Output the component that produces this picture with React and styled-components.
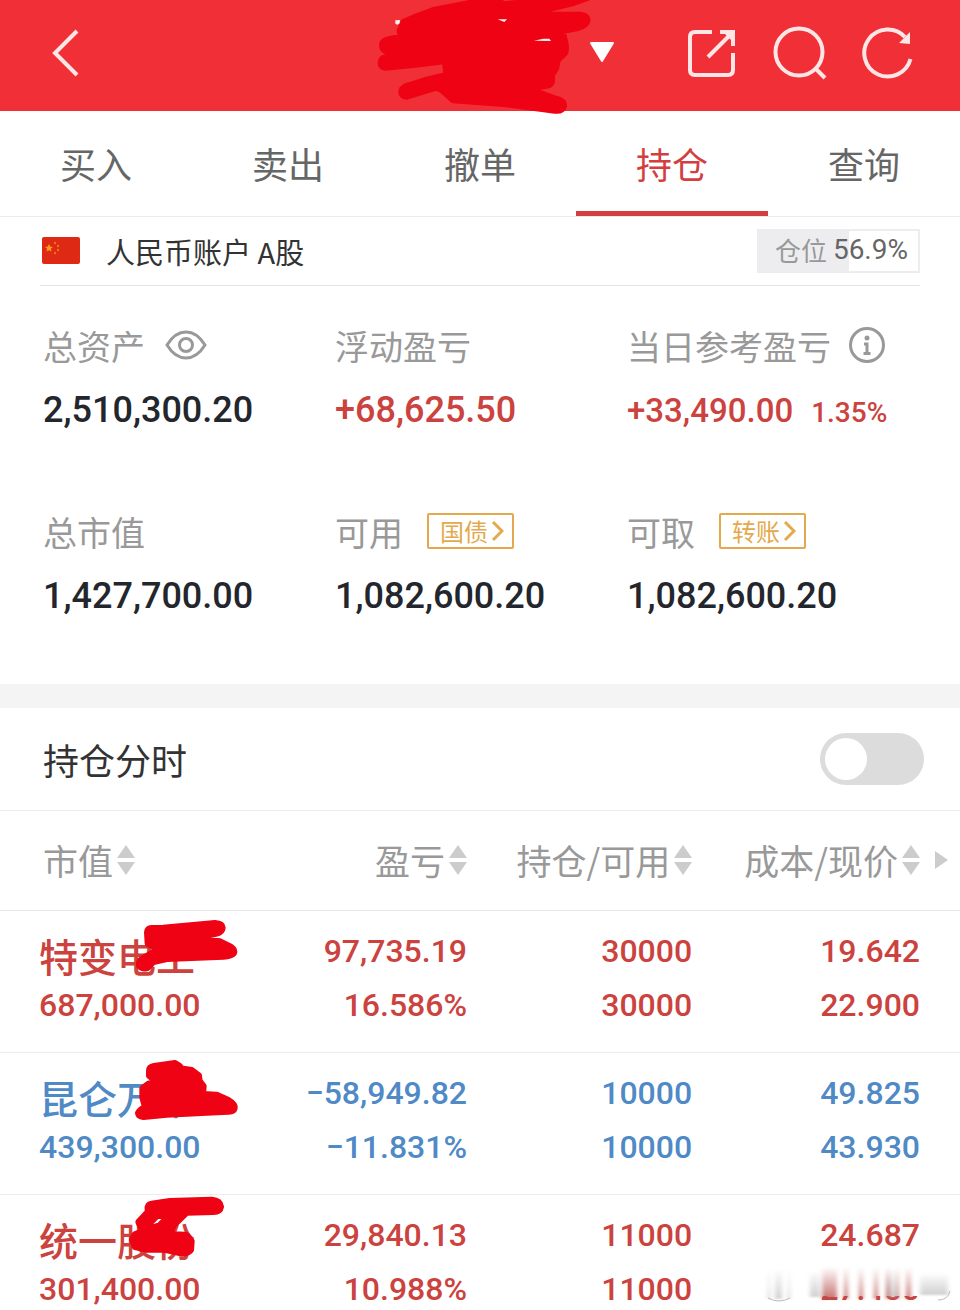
import React, { useState } from 'react';
import styled, { createGlobalStyle } from 'styled-components';

const RED = '#cb423e';
const BLUE = '#4f8ac6';
const INK = '#ee0213';

const GlobalStyle = createGlobalStyle`
    * {
        box-sizing: border-box;
    }
    body {
        margin: 0;
        background: #fff;
        color: #333;
        font-family: 'Noto Sans CJK SC', sans-serif;
        overflow: hidden;
    }
`;

const BaseButton = styled.button`
    padding: 0;
    border: none;
    background: none;
    color: inherit;
    font: inherit;
    cursor: pointer;
`;

const Header = styled.header`
    display: grid;
    grid-template-columns: 1fr auto 1fr;
    padding: 25px 44px 30px;
    background: #f12f37;
`;

const IconButton = styled(BaseButton)`
    width: 56px;
    height: 56px;
    color: #ffe6e6;
`;

const TitleButton = styled(BaseButton)`
    position: relative;
    display: flex;
    align-items: center;
    justify-content: flex-end;
    width: 272px;
    height: 56px;
`;

const Actions = styled.div`
    display: flex;
    justify-content: flex-end;
    gap: 32px;
`;

const Icon = styled.svg`
    display: block;
    flex: none;
    fill: none;
    stroke: currentColor;
    stroke-width: ${({ $stroke }) => $stroke || 4}px;
`;

const Scribble = styled.svg`
    position: absolute;
    top: ${({ $top }) => $top}px;
    left: ${({ $left }) => $left}px;
    z-index: 1;
    fill: ${INK};
    stroke: ${INK};
    stroke-width: 20px;
    stroke-linejoin: round;
    pointer-events: none;
`;

const Tabs = styled.nav`
    display: grid;
    grid-template-columns: repeat(5, 1fr);
    border-bottom: 1px solid #ececec;
`;

const Tab = styled(BaseButton)`
    height: 105px;
    padding-top: 4px;
    border-bottom: 5px solid ${({ $active }) => ($active ? '#d33f40' : 'transparent')};
    color: ${({ $active }) => ($active ? '#d33f40' : '#666')};
    font-size: 36px;
    line-height: 52px;
`;

const Account = styled.section`
    display: flex;
    align-items: center;
    height: 69px;
    margin: 0 40px;
    border-bottom: 1px solid #e4e4e4;
`;

const AccountName = styled.span`
    flex: 1;
    margin-left: 26px;
    font-size: 29px;
    line-height: 44px;
`;

const Ratio = styled.div`
    display: flex;
    align-items: center;
    gap: 6px;
    height: 44px;
    padding: 0 10px 2px 16px;
    border: 2px solid #ededf0;
    background: linear-gradient(to right, #ededf0 ${({ $value }) => $value}%, #fff ${({ $value }) => $value}%);
    color: #999;
    font-size: 26px;
    line-height: 40px;
`;

const RatioValue = styled.span`
    color: #666;
    font-family: Roboto, sans-serif;
    font-size: 28px;
`;

const Summary = styled.section`
    display: grid;
    grid-template-columns: repeat(3, 1fr);
    row-gap: 67px;
    padding: 33px 41px 62px 43px;
    border-bottom: 24px solid #f4f4f4;
`;

const Label = styled.div`
    display: flex;
    align-items: center;
    height: 52px;
    color: #999;
    font-size: 34px;
    white-space: nowrap;

    > svg {
        margin-left: 17px;
    }
`;

const Amount = styled.div`
    display: flex;
    align-items: baseline;
    gap: 18px;
    margin-top: 14px;
    color: ${({ $color }) => $color || '#24262d'};
    font-family: Roboto, sans-serif;
    font-size: ${({ $small }) => ($small ? 33 : 36)}px;
    font-weight: 500;
    line-height: 51px;
    white-space: nowrap;
`;

const Percent = styled.span`
    font-size: 28px;
`;

const Tag = styled(BaseButton)`
    display: flex;
    align-items: center;
    gap: 3px;
    height: 36px;
    margin-left: 24px;
    padding: 0 8px 0 11px;
    border: 2px solid #e3a94c;
    border-radius: 2px;
    color: #e3a94c;
    font-size: 24px;
    line-height: 32px;
`;

const SwitchRow = styled.label`
    display: flex;
    align-items: center;
    justify-content: space-between;
    height: 103px;
    padding: 0 36px 0 43px;
    border-bottom: 1px solid #ececec;
    font-size: 36px;
`;

const Switch = styled.input`
    appearance: none;
    width: 104px;
    height: 52px;
    margin: 0;
    padding: 5px;
    border-radius: 26px;
    background: ${({ checked }) => (checked ? '#d33f40' : '#dcdcdc')};

    &::before {
        content: '';
        display: block;
        width: 42px;
        height: 42px;
        margin-left: ${({ checked }) => (checked ? 52 : 0)}px;
        border-radius: 50%;
        background: #fff;
    }
`;

const Table = styled.table`
    width: 100%;
    border-collapse: collapse;
    table-layout: fixed;
`;

const Col = styled.col`
    width: ${({ $width }) => $width};
`;

const Th = styled.th`
    position: relative;
    height: 99px;
    padding: 0 ${({ $last }) => ($last ? 40 : 0)}px 0 ${({ $first }) => ($first ? 43 : 0)}px;
    border-bottom: 1px solid #e8e8e8;
    font-weight: 400;
`;

const SortButton = styled(BaseButton)`
    display: flex;
    align-items: center;
    gap: 4px;
    margin-left: ${({ $first }) => ($first ? 0 : 'auto')};
    color: #999;
    font-size: 35px;
    line-height: 52px;
    white-space: nowrap;

    svg {
        fill: #ccc;
    }
`;

const MoreArrow = styled.svg`
    position: absolute;
    top: 40px;
    right: 12px;
    fill: #ccc;
`;

const Row = styled.tr`
    color: ${({ $color }) => $color};
    border-bottom: 1px solid #ececec;
`;

const Td = styled.td`
    position: relative;
    height: 142px;
    padding: 13px ${({ $last }) => ($last ? 40 : 0)}px 0 ${({ $first }) => ($first ? 39 : 0)}px;
    font-family: Roboto, sans-serif;
    font-size: 32px;
    font-weight: 500;
    line-height: 54px;
    text-align: ${({ $first }) => ($first ? 'left' : 'right')};
    vertical-align: top;
    white-space: nowrap;
`;

const StockName = styled.div`
    height: 54px;
    font-family: 'Noto Sans CJK SC', sans-serif;
    font-size: 39px;
    line-height: 62px;
`;

const Smear = styled.svg`
    position: absolute;
    top: 70px;
    right: 0;
`;

const SCRIBBLES = [
    {
        top: 0,
        path: 'M382 64Q382 51 396 52L430 51L585 37Q606 38 607 50Q606 62 590 67L540 78L540 86L600 92L632 108Q645 118 641 126Q634 134 610 136L440 143L400 152L382 170Q366 174 358 164Q356 152 366 144L400 124L410 112L384 98Z',
    },
    {
        top: -2,
        path: 'M388 60Q388 48 402 46L465 37L478 45L484 53L515 58L536 74L538 90L550 106L548 130L590 132L625 148Q646 160 643 172Q640 182 624 181L560 184L440 190L370 197Q356 196 355 186Q360 176 376 168L368 140L368 112L384 100L408 90L388 74Z',
    },
    {
        top: -9,
        path: 'M384 72Q382 56 395 54L450 46L575 42Q600 44 602 62Q600 76 580 77L500 79L460 118L450 144L500 148L514 166L512 192Q504 202 485 202L460 196L430 190L380 190L345 182L337 160L345 146L364 138L420 118L450 86L410 90L388 112L362 122L356 108L384 78Z',
    },
];

const HOLDINGS = [
    { name: '特变电工', value: '687,000.00', profit: '97,735.19', rate: '16.586%', held: '30000', free: '30000', cost: '19.642', price: '22.900' },
    { name: '昆仑万维', value: '439,300.00', profit: '−58,949.82', rate: '−11.831%', held: '10000', free: '10000', cost: '49.825', price: '43.930' },
    { name: '统一股份', value: '301,400.00', profit: '29,840.13', rate: '10.988%', held: '11000', free: '11000', cost: '24.687', price: '27.400' },
];

const TABS = ['买入', '卖出', '撤单', '持仓', '查询'];
const COLUMNS = ['市值', '盈亏', '持仓/可用', '成本/现价'];

const Flag = () => (
    <svg width="40" height="28" viewBox="0 0 40 28" aria-hidden="true">
        <rect x="2" y="0" width="38" height="27" rx="2" fill="#de2a15" />
        <path d="M9 7l1.200 2.600 2.800.3-2.100 1.900.6 2.800L9 13.200l-2.500 1.400.6-2.800L5 9.900l2.800-.3z" fill="#fb9b1e" />
        <g fill="#f5701c">
            <circle cx="15" cy="6" r="1.200" />
            <circle cx="18" cy="9" r="1.200" />
            <circle cx="18" cy="13" r="1.200" />
            <circle cx="15" cy="16" r="1.200" />
        </g>
    </svg>
);

const Chevron = () => (
    <Icon width="13" height="22" viewBox="0 0 13 22" $stroke={3} aria-hidden="true">
        <path d="M2 2l9 9-9 9" />
    </Icon>
);

const SmearedMark = () => (
    <Smear width="200" height="46" viewBox="0 0 200 46" aria-hidden="true">
        <defs>
            <filter id="soft" x="-20%" y="-20%" width="140%" height="140%">
                <feGaussianBlur stdDeviation="2 1" />
            </filter>
            <linearGradient id="streak" x1="0" y1="0" x2="0" y2="1">
                <stop offset="0" stopColor="#b8504c" stopOpacity="0" />
                <stop offset="1" stopColor="#b8504c" stopOpacity="0.8" />
            </linearGradient>
            <linearGradient id="grey" x1="0" y1="0" x2="0" y2="1">
                <stop offset="0" stopColor="#bbb" stopOpacity="0" />
                <stop offset="1" stopColor="#bbb" stopOpacity="0.7" />
            </linearGradient>
        </defs>
        <rect x="0" y="0" width="200" height="31" fill="#fff" />
        <g filter="url(#soft)">
            <g fill="url(#grey)">
                <rect x="8" y="4" width="2" height="30" />
                <rect x="15" y="4" width="7" height="30" />
                <rect x="28" y="4" width="2" height="30" />
                <rect x="50" y="6" width="10" height="26" />
                <rect x="126" y="4" width="10" height="28" />
                <rect x="160" y="8" width="28" height="22" />
            </g>
            <g fill="url(#streak)">
                <rect x="62" y="2" width="15" height="32" />
                <rect x="84" y="2" width="4" height="32" />
                <rect x="99" y="2" width="4" height="32" />
                <rect x="114" y="2" width="4" height="32" />
                <rect x="126" y="2" width="4" height="32" />
                <rect x="136" y="2" width="3" height="32" />
                <rect x="146" y="2" width="5" height="32" />
            </g>
        </g>
        <path d="M8 33q11 6 22 0M178 35q10 0 12-9" fill="none" stroke="#bbb" />
    </Smear>
);

const App = () => {
    const [tab, setTab] = useState('持仓');
    const [showTimeline, setShowTimeline] = useState(false);

    return (
        <>
            <GlobalStyle />
            <Header>
                <IconButton aria-label="返回">
                    <Icon width="56" height="56" viewBox="0 0 56 56">
                        <path d="M33 6L11 28l22 22" />
                    </Icon>
                </IconButton>
                <TitleButton aria-label="切换账户">
                    <svg width="28" height="24" viewBox="0 0 28 24">
                        <path d="M3 2h22L14 20z" fill="#fff" stroke="#fff" strokeWidth="2" strokeLinejoin="round" />
                    </svg>
                    <Scribble $top={-25} $left={16} width="300" height="120" viewBox="0 0 900 360">
                        <path d="M120 92L132 66L170 50L225 30L330 10L400 -10L430 14L470 10L540 2L600 -10H690L640 8L560 28L570 45L660 45Q680 46 682 60Q680 76 650 84L606 92L612 116Q620 140 615 158L592 180L588 204L574 226Q580 252 562 256L530 262L534 278L590 298Q612 304 611 318Q606 334 585 331L440 312L280 300L244 268L228 262L140 289Q124 288 125 272Q130 260 150 256L200 240L260 226L256 182L180 192L75 202Q63 200 63 188Q64 174 80 172L110 160L80 154Q66 148 67 134Q68 122 85 119L124 110Z" />
                        <path d="M106 61l14-1-1 10-7 4-6-3zM413 58l28 0-8 8zM522 122l28-6 18 0 5 7z" fill="#fff0ee" stroke="none" />
                    </Scribble>
                </TitleButton>
                <Actions>
                    <IconButton aria-label="分享">
                        <Icon width="56" height="56" viewBox="0 0 56 56">
                            <path d="M28 7H11q-5 0-5 5v33q0 5 5 5h33q5 0 5-5V28M36 7h13v14M24 32L48 8" />
                            <path d="M40 8h9v9z" fill="currentColor" stroke="none" />
                        </Icon>
                    </IconButton>
                    <IconButton aria-label="搜索">
                        <Icon width="56" height="56" viewBox="0 0 56 56">
                            <circle cx="27" cy="27" r="23.500" />
                            <path d="M43 43l10 10" />
                        </Icon>
                    </IconButton>
                    <IconButton aria-label="刷新">
                        <Icon width="56" height="56" viewBox="0 0 56 56">
                            <path d="M50.500 34A23.500 23.500 0 1 1 45 12" />
                            <path d="M50 7v12L39 18z" fill="currentColor" stroke="none" />
                        </Icon>
                    </IconButton>
                </Actions>
            </Header>

            <Tabs>
                {TABS.map((name) => (
                    <Tab key={name} $active={name === tab} onClick={() => setTab(name)}>
                        {name}
                    </Tab>
                ))}
            </Tabs>

            <Account>
                <Flag />
                <AccountName>人民币账户 A股</AccountName>
                <Ratio $value={56.9}>
                    仓位
                    <RatioValue>56.9%</RatioValue>
                </Ratio>
            </Account>

            <Summary>
                <div>
                    <Label>
                        总资产
                        <Icon width="48" height="34" viewBox="0 0 48 34" $stroke={3}>
                            <path d="M5 17Q13 4 24 4t19 13Q35 30 24 30T5 17z" />
                            <circle cx="24" cy="17" r="6.500" />
                        </Icon>
                    </Label>
                    <Amount>2,510,300.20</Amount>
                </div>
                <div>
                    <Label>浮动盈亏</Label>
                    <Amount $color={RED}>+68,625.50</Amount>
                </div>
                <div>
                    <Label>
                        当日参考盈亏
                        <Icon width="38" height="38" viewBox="0 0 38 38" $stroke={3}>
                            <circle cx="19" cy="19" r="16.500" />
                            <circle cx="19" cy="12" r="2.500" fill="currentColor" stroke="none" />
                            <path d="M16 18h3v9M15.500 27.500h7" />
                        </Icon>
                    </Label>
                    <Amount $color={RED} $small>
                        +33,490.00 <Percent>1.35%</Percent>
                    </Amount>
                </div>
                <div>
                    <Label>总市值</Label>
                    <Amount>1,427,700.00</Amount>
                </div>
                <div>
                    <Label>
                        可用
                        <Tag>国债<Chevron /></Tag>
                    </Label>
                    <Amount>1,082,600.20</Amount>
                </div>
                <div>
                    <Label>
                        可取
                        <Tag>转账<Chevron /></Tag>
                    </Label>
                    <Amount>1,082,600.20</Amount>
                </div>
            </Summary>

            <SwitchRow>
                持仓分时
                <Switch type="checkbox" checked={showTimeline} onChange={(e) => setShowTimeline(e.target.checked)} />
            </SwitchRow>

            <Table>
                <colgroup>
                    <Col $width="25%" />
                    <Col $width="23.65%" />
                    <Col $width="23.45%" />
                    <Col />
                </colgroup>
                <thead>
                    <tr>
                        {COLUMNS.map((name, i) => (
                            <Th key={name} $first={i === 0} $last={i === 3}>
                                <SortButton $first={i === 0}>
                                    {name}
                                    <svg width="18" height="30" viewBox="0 0 18 30" aria-hidden="true">
                                        <path d="M9 0l9 13H0zM9 30l9-13H0z" />
                                    </svg>
                                </SortButton>
                                {i === 3 && (
                                    <MoreArrow width="13" height="18" viewBox="0 0 13 18" aria-hidden="true">
                                        <path d="M0 0l13 9-13 9z" />
                                    </MoreArrow>
                                )}
                            </Th>
                        ))}
                    </tr>
                </thead>
                <tbody>
                    {HOLDINGS.map((row, i) => (
                        <Row key={row.name} $color={row.profit.startsWith('−') ? BLUE : RED}>
                            <Td $first>
                                <StockName>{row.name}</StockName>
                                {row.value}
                                <Scribble $top={SCRIBBLES[i].top} $left={20} width="240" height="120" viewBox="0 0 720 360">
                                    <path d={SCRIBBLES[i].path} />
                                </Scribble>
                            </Td>
                            <Td>
                                {row.profit}
                                <br />
                                {row.rate}
                            </Td>
                            <Td>
                                {row.held}
                                <br />
                                {row.free}
                            </Td>
                            <Td $last>
                                {row.cost}
                                <br />
                                {row.price}
                                {i === HOLDINGS.length - 1 && <SmearedMark />}
                            </Td>
                        </Row>
                    ))}
                </tbody>
            </Table>
        </>
    );
};

export default App;
